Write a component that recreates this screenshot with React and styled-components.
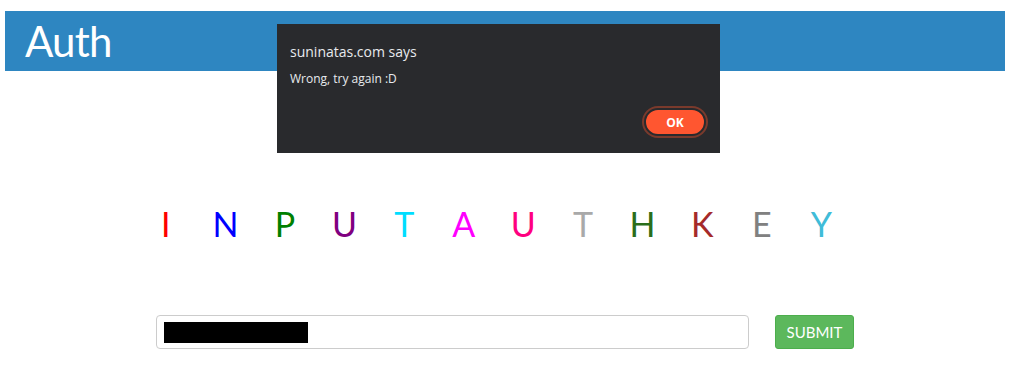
import React from "react";
import styled, { createGlobalStyle } from "styled-components";

const letters = [
  ["I", "#ff0000"],
  ["N", "#0000ff"],
  ["P", "#008000"],
  ["U", "#800080"],
  ["T", "#00ddff"],
  ["A", "#ff00ff"],
  ["U", "#ff0080"],
  ["T", "#a9a9a9"],
  ["H", "#2a6e1a"],
  ["K", "#a52a2a"],
  ["E", "#808080"],
  ["Y", "#40bcd8"],
];

function App() {
  return (
    <Page>
      <GlobalStyle />
      <Header>
        <h1>Auth</h1>
      </Header>
      <KeyRow>
        {letters.map(([ch, color], i) => (
          <Letter key={i} color={color}>
            {ch}
          </Letter>
        ))}
      </KeyRow>
      <Form>
        <Field>
          <Masked />
        </Field>
        <Submit>SUBMIT</Submit>
      </Form>
      <Dialog>
        <DialogTitle>suninatas.com says</DialogTitle>
        <DialogMessage>Wrong, try again :D</DialogMessage>
        <DialogActions>
          <OkButton>OK</OkButton>
        </DialogActions>
      </Dialog>
    </Page>
  );
}

const GlobalStyle = createGlobalStyle`
  body {
    margin: 0;
    background: #fff;
    font-family: "Lato", "Liberation Sans", sans-serif;
  }
`;

const Page = styled.div`
  position: relative;
  width: 1013px;
  height: 374px;
  padding-top: 11px;
  box-sizing: border-box;
`;

const Header = styled.div`
  margin-left: 5px;
  width: 1000px;
  height: 60px;
  background: #2e86c1;
  display: flex;
  align-items: center;
  padding-left: 20px;
  box-sizing: border-box;

  h1 {
    margin: 0;
    color: #fff;
    font-family: "Lato", sans-serif;
    font-weight: 400;
    font-size: 42px;
    line-height: 1;
    letter-spacing: -0.8px;
  }
`;

const KeyRow = styled.div`
  display: flex;
  margin-top: 133px;
  padding-left: 136px;
  height: 40px;
  align-items: center;
`;

const Letter = styled.span`
  width: 59.6px;
  text-align: center;
  color: ${(p) => p.color};
  font-family: "Lato", sans-serif;
  font-weight: 400;
  font-size: 34px;
  line-height: 40px;
`;

const Form = styled.div`
  display: flex;
  align-items: center;
  gap: 26px;
  margin-top: 71px;
  padding-left: 156px;
`;

const Field = styled.div`
  width: 593px;
  height: 34px;
  border: 1px solid #cccccc;
  border-radius: 4px;
  box-sizing: border-box;
  display: flex;
  align-items: center;
  padding-left: 7px;
`;

const Masked = styled.div`
  width: 144px;
  height: 21px;
  background: #000;
`;

const Submit = styled.button`
  width: 79px;
  height: 34px;
  border: 1px solid #4cae4c;
  border-radius: 3px;
  background: #5cb85c;
  color: #fff;
  font-family: "Lato", sans-serif;
  font-weight: 400;
  font-size: 15px;
  padding: 0;
`;

const Dialog = styled.div`
  position: absolute;
  left: 277px;
  top: 24px;
  width: 443px;
  height: 129px;
  background: #292a2d;
  box-sizing: border-box;
  padding: 18px 14px 0 13px;
  font-family: "Open Sans", "Noto Sans", sans-serif;
  color: #e8eaed;
`;

const DialogTitle = styled.div`
  font-size: 14px;
  line-height: 20px;
`;

const DialogMessage = styled.div`
  margin-top: 9px;
  font-size: 12px;
  line-height: 16px;
`;

const DialogActions = styled.div`
  display: flex;
  justify-content: flex-end;
  margin-top: 21px;
`;

const OkButton = styled.button`
  width: 62px;
  height: 28px;
  border-radius: 14px;
  background: #ff5630;
  border: 2px solid #292a2d;
  box-shadow: 0 0 0 2px #7a3a2c;
  color: #fff;
  font-family: "Open Sans", sans-serif;
  font-weight: 700;
  font-size: 12px;
  padding: 0;
`;

export default App;
